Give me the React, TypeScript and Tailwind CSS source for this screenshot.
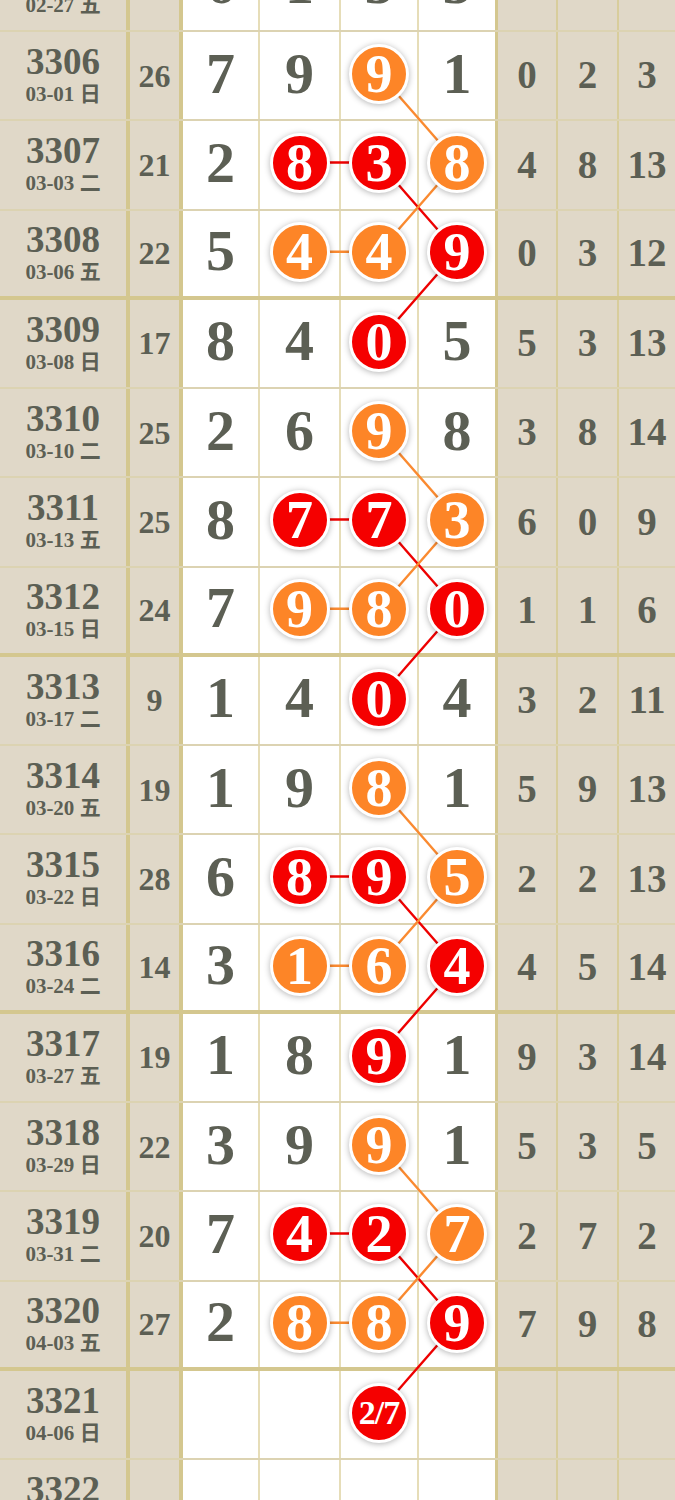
import React from 'react';

type Row = {
  no: string;
  date: string;
  wd: string;
  sum: string;
  nums: string[];
  right: string[];
};

// 'r' prefix = red ball, 'o' prefix = orange ball
const rows: Row[] = [
  { no: '3305', date: '02-27', wd: '五', sum: '13', nums: ['6', '1', '3', '3'], right: ['0', '0', '12'] },
  { no: '3306', date: '03-01', wd: '日', sum: '26', nums: ['7', '9', 'o9', '1'], right: ['0', '2', '3'] },
  { no: '3307', date: '03-03', wd: '二', sum: '21', nums: ['2', 'r8', 'r3', 'o8'], right: ['4', '8', '13'] },
  { no: '3308', date: '03-06', wd: '五', sum: '22', nums: ['5', 'o4', 'o4', 'r9'], right: ['0', '3', '12'] },
  { no: '3309', date: '03-08', wd: '日', sum: '17', nums: ['8', '4', 'r0', '5'], right: ['5', '3', '13'] },
  { no: '3310', date: '03-10', wd: '二', sum: '25', nums: ['2', '6', 'o9', '8'], right: ['3', '8', '14'] },
  { no: '3311', date: '03-13', wd: '五', sum: '25', nums: ['8', 'r7', 'r7', 'o3'], right: ['6', '0', '9'] },
  { no: '3312', date: '03-15', wd: '日', sum: '24', nums: ['7', 'o9', 'o8', 'r0'], right: ['1', '1', '6'] },
  { no: '3313', date: '03-17', wd: '二', sum: '9', nums: ['1', '4', 'r0', '4'], right: ['3', '2', '11'] },
  { no: '3314', date: '03-20', wd: '五', sum: '19', nums: ['1', '9', 'o8', '1'], right: ['5', '9', '13'] },
  { no: '3315', date: '03-22', wd: '日', sum: '28', nums: ['6', 'r8', 'r9', 'o5'], right: ['2', '2', '13'] },
  { no: '3316', date: '03-24', wd: '二', sum: '14', nums: ['3', 'o1', 'o6', 'r4'], right: ['4', '5', '14'] },
  { no: '3317', date: '03-27', wd: '五', sum: '19', nums: ['1', '8', 'r9', '1'], right: ['9', '3', '14'] },
  { no: '3318', date: '03-29', wd: '日', sum: '22', nums: ['3', '9', 'o9', '1'], right: ['5', '3', '5'] },
  { no: '3319', date: '03-31', wd: '二', sum: '20', nums: ['7', 'r4', 'r2', 'o7'], right: ['2', '7', '2'] },
  { no: '3320', date: '04-03', wd: '五', sum: '27', nums: ['2', 'o8', 'o8', 'r9'], right: ['7', '9', '8'] },
  { no: '3321', date: '04-06', wd: '日', sum: '', nums: ['', '', 'r2/7', ''], right: ['', '', ''] },
  { no: '3322', date: '04-08', wd: '二', sum: '', nums: ['', '', '', ''], right: ['', '', ''] },
];

const ROW_H = 89.25;
const colX = [220.5, 299.5, 379, 457];

// [rowIndex, col, rowIndex, col, color]
const links: [number, number, number, number, string][] = [];
[1, 5, 9, 13].forEach((s) => {
  links.push([s, 2, s + 1, 3, 'o']);
  links.push([s + 1, 1, s + 1, 2, 'r']);
  links.push([s + 1, 2, s + 2, 3, 'r']);
  links.push([s + 1, 3, s + 2, 2, 'o']);
  links.push([s + 2, 1, s + 2, 2, 'o']);
  links.push([s + 2, 3, s + 3, 2, 'r']);
});

const serif = { fontFamily: "'Liberation Serif', 'Noto Sans CJK SC', serif" };

function Ball({ value }: { value: string }) {
  const red = value[0] === 'r';
  const text = value.slice(1);
  return (
    <div
      className={`relative z-10 -mt-[3px] flex h-[60px] w-[60px] items-center justify-center rounded-full border-[3px] border-white text-white shadow-[0_1px_6px_rgba(0,0,0,0.3)] ${
        red ? 'bg-[#f50000]' : 'bg-[#fd8527]'
      } ${text.length > 1 ? 'text-[34px] tracking-[-1px]' : 'text-[54px]'}`}
    >
      <span className="leading-none">{text}</span>
    </div>
  );
}

function Cell({ value, className }: { value: string; className: string }) {
  const isBall = value[0] === 'r' || value[0] === 'o';
  return (
    <div className={`flex items-center justify-center bg-white ${className}`}>
      {isBall ? <Ball value={value} /> : <span className="-mt-[4px] text-[58px] leading-none">{value}</span>}
    </div>
  );
}

export default function App() {
  return (
    <div className="h-[1500px] w-[675px] overflow-hidden bg-[#e0d8c8] font-bold text-[#5c5f54]" style={serif}>
      <div className="relative -mt-[57.25px]">
        {rows.map((r, i) => {
          const thick = i % 4 === 3;
          const bb = thick ? 'border-b-[4px] border-b-[#d4c78f]' : 'border-b-[2px] border-b-[#d8cd9c]/50';
          return (
            <div key={r.no} className={`flex h-[89.25px] ${bb}`}>
              <div className="flex w-[130px] flex-col items-center justify-center border-r-[4px] border-r-[#d4c78f]">
                <span className="text-[37px] leading-[30px]">{r.no}</span>
                <span className="mt-[7px] text-[21px] leading-[20px]">
                  {r.date} {r.wd}
                </span>
              </div>
              <div className="flex w-[53px] items-center justify-center border-r-[4px] border-r-[#d4c78f] text-[32px]">
                {r.sum}
              </div>
              <Cell value={r.nums[0]} className="w-[77px] border-r-[2px] border-r-[#e6ddb8]" />
              <Cell value={r.nums[1]} className="w-[81px] border-r-[2px] border-r-[#e6ddb8]" />
              <Cell value={r.nums[2]} className="w-[78px] border-r-[2px] border-r-[#e6ddb8]" />
              <Cell value={r.nums[3]} className="w-[79px] border-r-[3px] border-r-[#d4c78f]" />
              <div className="flex w-[60px] items-center justify-center border-r-[2px] border-r-[#d8cd9c] text-[39px]">
                {r.right[0]}
              </div>
              <div className="flex w-[61px] items-center justify-center border-r-[2px] border-r-[#d8cd9c] text-[39px]">
                {r.right[1]}
              </div>
              <div className="flex flex-1 items-center justify-center text-[39px]">{r.right[2]}</div>
            </div>
          );
        })}
        <svg className="pointer-events-none absolute left-0 top-0" width={675} height={rows.length * ROW_H}>
          {links.map(([r1, c1, r2, c2, col], k) => {
            const y1 = r1 * ROW_H + 41;
            const y2 = r2 * ROW_H + 41;
            return (
              <line
                key={k}
                x1={colX[c1]}
                y1={y1}
                x2={colX[c2]}
                y2={y2}
                stroke={col === 'r' ? '#ee0000' : '#fa8a30'}
                strokeWidth={2.4}
              />
            );
          })}
        </svg>
      </div>
    </div>
  );
}
